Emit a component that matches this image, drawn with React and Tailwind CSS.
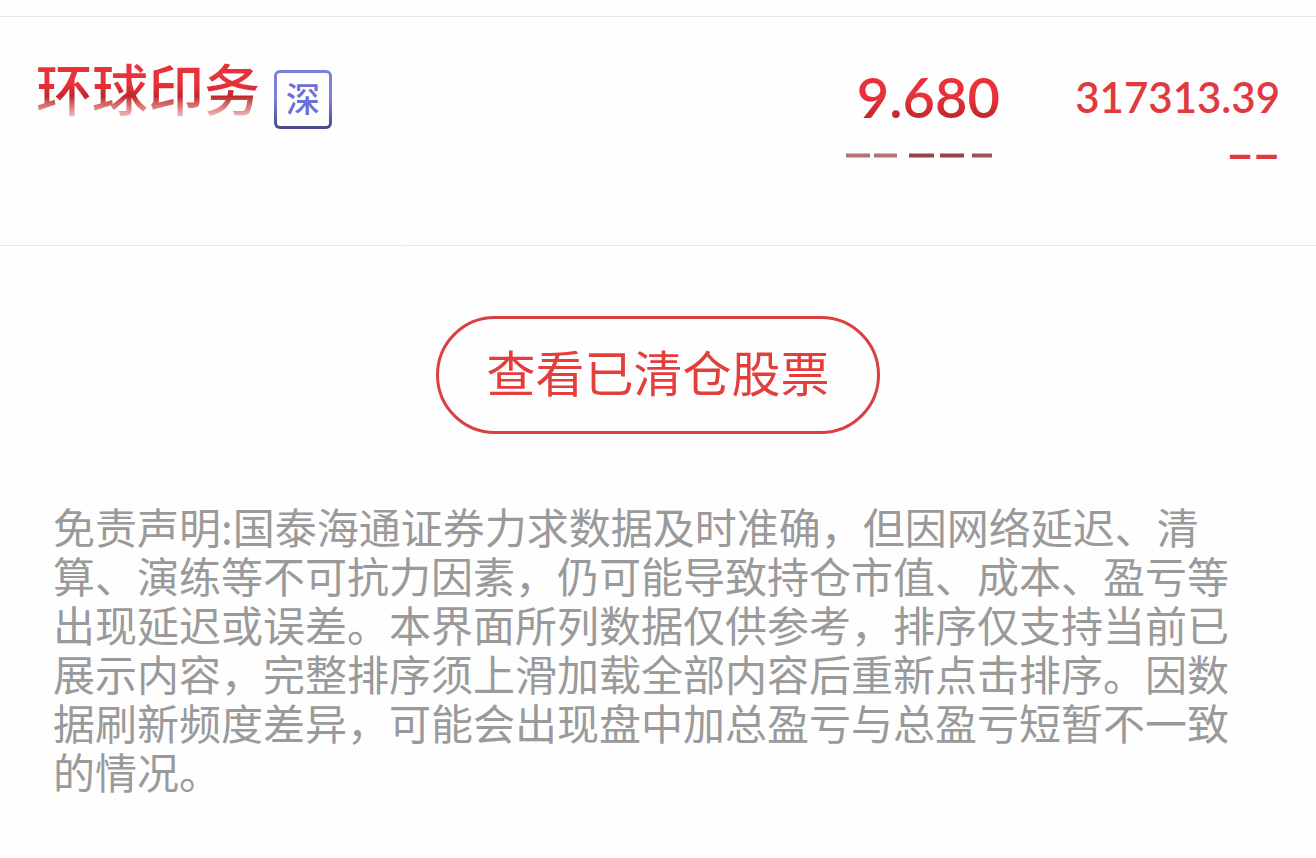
const holdings = [
  { name: '环球印务', market: '深', price: '9.680', amount: '317313.39', change: '−−' },
]

const disclaimer = '免责声明:国泰海通证券力求数据及时准确，但因网络延迟、清算、演练等不可抗力因素，仍可能导致持仓市值、成本、盈亏等出现延迟或误差。本界面所列数据仅供参考，排序仅支持当前已展示内容，完整排序须上滑加载全部内容后重新点击排序。因数据刷新频度差异，可能会出现盘中加总盈亏与总盈亏短暂不一致的情况。'

// short strokes under the price
function PriceDashes() {
  return (
    <svg width="146" height="5" viewBox="0 0 146 5" aria-hidden="true">
      <rect x="0" y="0.5" width="24" height="4" fill="#b0757a" />
      <rect x="28" y="0.5" width="23" height="4" fill="#b0757a" />
      <rect x="63" y="0.5" width="25" height="4" fill="#964248" />
      <rect x="94" y="0.5" width="24" height="4" fill="#964248" />
      <rect x="126" y="0.5" width="20" height="4" fill="#9c5257" />
    </svg>
  )
}

function HoldingRow({ item }) {
  return (
    <li className="flex h-[230px] border-y border-[#e8e8e8]">
      <div className="flex w-[406px] shrink-0 items-start gap-[14px] border-r border-[#f9f9f9] pt-[38px] pl-9">
        <h2 className="bg-linear-to-b from-[#e8323b] from-45% via-[#c0262e] via-65% to-[#edb5b8] to-95% bg-clip-text text-[56px] leading-[64px] font-medium text-transparent">
          {item.name}
        </h2>
        <span className="mt-[15px] rounded-md bg-linear-to-b from-[#7b80dc] from-50% to-[#454988] p-[3px]">
          <span className="flex h-[53px] w-[52px] items-center justify-center rounded-[3px] bg-[#fefefe] pb-1 text-[34px] leading-[48px] font-medium text-[#6a70d6]">
            {item.market}
          </span>
        </span>
      </div>
      <div className="flex flex-1 flex-col items-end pt-12 pr-[24px] font-['Lato',sans-serif]">
        <span className="bg-linear-to-b from-[#e8323b] from-50% to-[#b8242c] to-90% bg-clip-text text-[56px] leading-[64px] font-semibold text-transparent">
          {item.price}
        </span>
        <div className="mt-6 pr-2">
          <PriceDashes />
        </div>
      </div>
      <div className="flex w-[292px] shrink-0 flex-col items-end pt-12 pr-9 font-['Lato',sans-serif] text-[#e03a41]">
        <span className="text-[42px] leading-[64px] font-semibold">{item.amount}</span>
        <span className="text-[46px] leading-[52px] font-bold">{item.change}</span>
      </div>
    </li>
  )
}

export default function App() {
  return (
    <main className="min-h-screen bg-[#fefefe] font-['Noto_Sans_CJK_SC',sans-serif]">
      <div className="h-4 w-[406px] border-r border-[#f9f9f9]" />
      <ul>
        {holdings.map(item => <HoldingRow key={item.name} item={item} />)}
      </ul>

      <div className="flex justify-center pt-[70px]">
        <button className="h-[118px] rounded-full border-3 border-[#d9403f] px-[47px] pb-2 text-[49px] leading-[56px] text-[#e33d3c]">
          查看已清仓股票
        </button>
      </div>

      <p className="pt-[67px] pr-20 pl-[53px] text-[42px] leading-[49px] text-[#9a9a9a]">
        {disclaimer}
      </p>
    </main>
  )
}
